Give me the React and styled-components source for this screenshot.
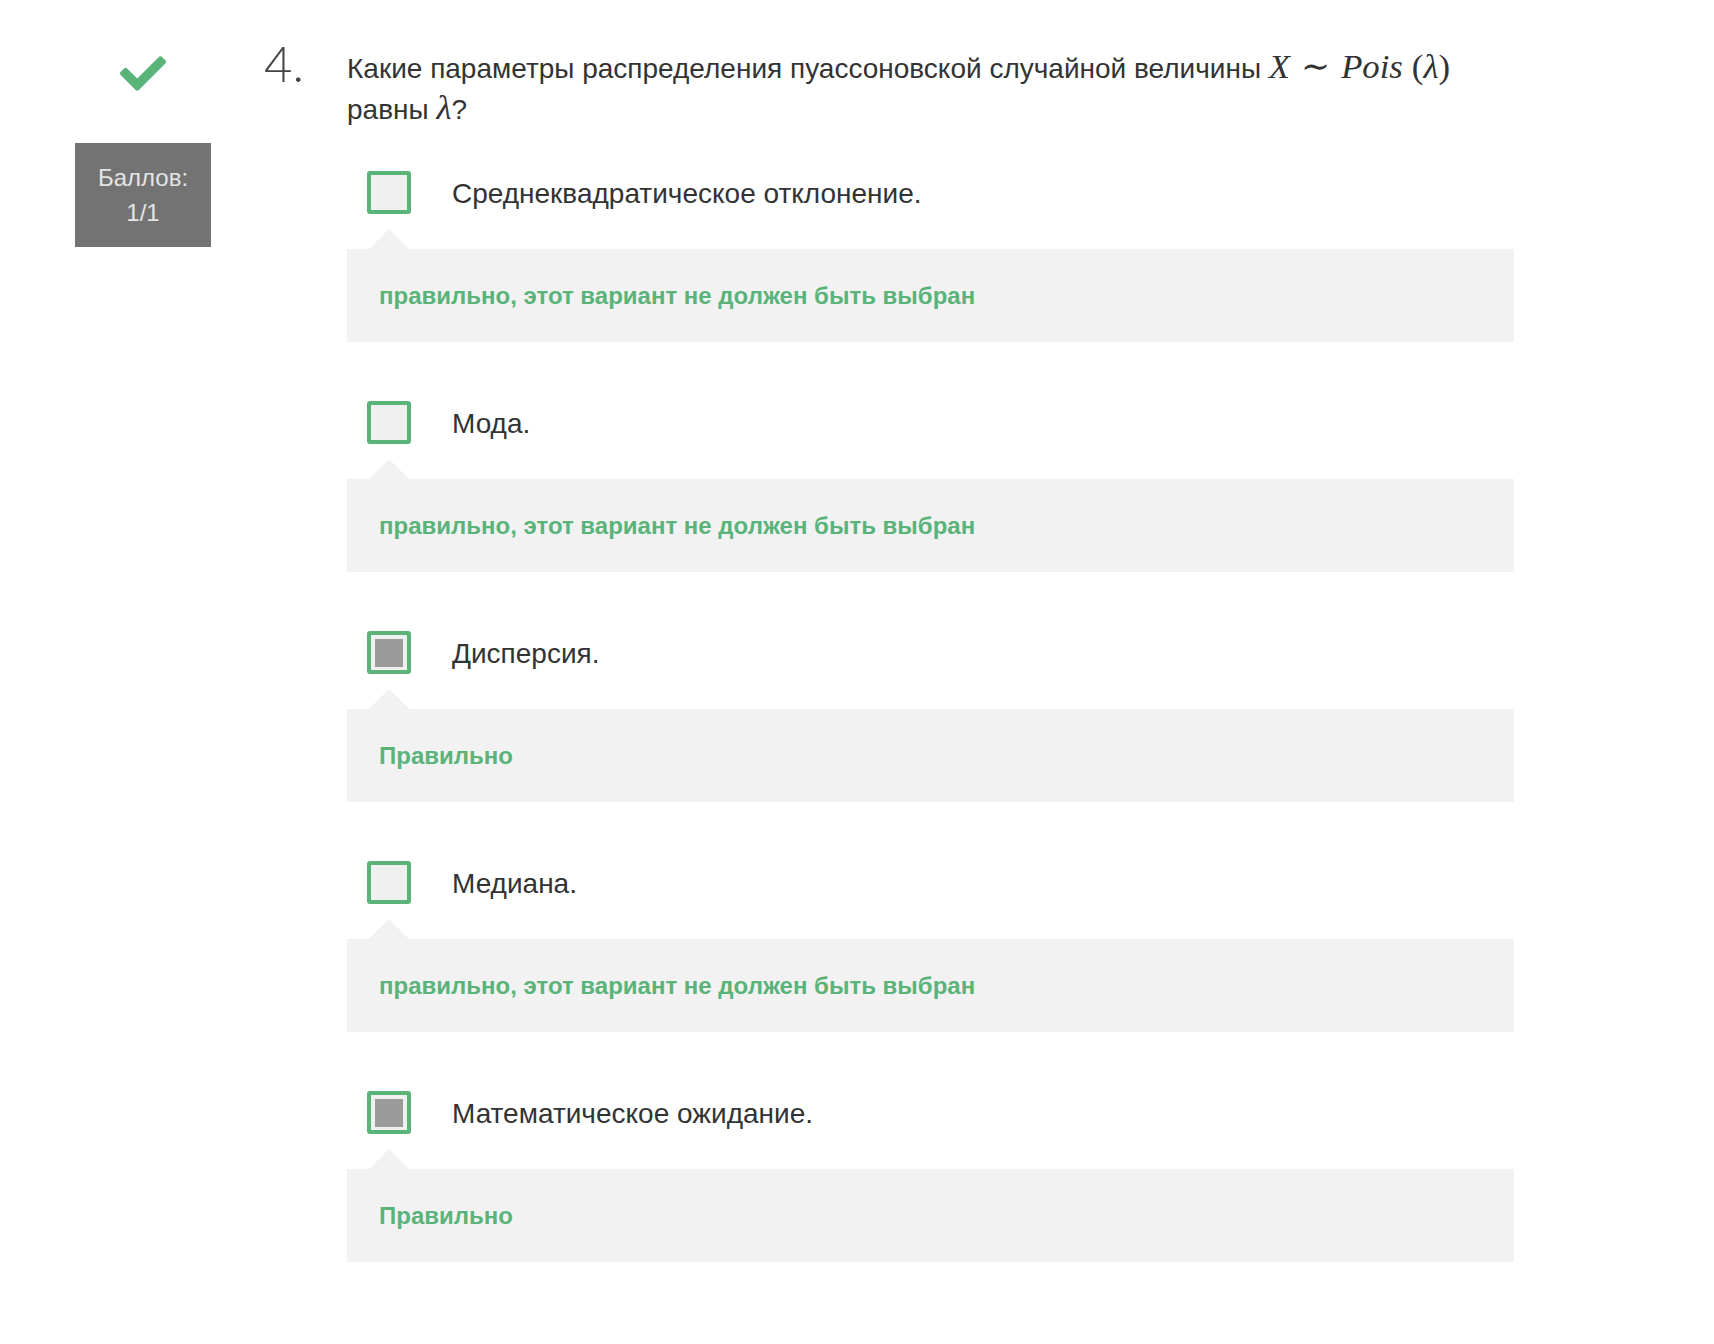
import React from "react";
import styled, { createGlobalStyle } from "styled-components";

const GREEN = "#5ab47a";

const GlobalStyle = createGlobalStyle`
  html, body {
    margin: 0;
    padding: 0;
    background: #ffffff;
  }
  body {
    font-family: "Liberation Sans", Arial, sans-serif;
    color: #333333;
  }
`;

const Page = styled.div`
  display: flex;
  align-items: flex-start;
  padding: 48px 0 80px 75px;
`;

const LeftCol = styled.div`
  width: 136px;
  display: flex;
  flex-direction: column;
  align-items: center;
`;

const CheckMark = styled.svg`
  width: 46px;
  height: 35px;
  margin-top: 8px;
  fill: ${GREEN};
`;

const ScoreBox = styled.div`
  margin-top: 52px;
  width: 136px;
  height: 104px;
  box-sizing: border-box;
  padding: 17px 0;
  background: #737373;
  color: #e4e4e4;
  font-size: 24px;
  line-height: 35px;
  text-align: center;
`;

const Number = styled.div`
  width: 136px;
  box-sizing: border-box;
  padding-left: 53px;
  margin-top: -9px;
  font-family: "Lato", "Open Sans", sans-serif;
  font-weight: 300;
  font-size: 49px;
  line-height: 48px;
  color: #444444;
`;

const Body = styled.div`
  width: 1167px;
`;

const Question = styled.div`
  font-size: 28px;
  line-height: 41px;
  color: #333333;
`;

const MathExpr = styled.span`
  font-family: "Liberation Serif", "DejaVu Serif", serif;
  font-size: 1.24em;
  line-height: 1;
`;

const MathVar = styled.span`
  font-style: italic;
  margin-right: ${(p) => p.$gap || 0}px;
`;

const MathOp = styled.span`
  font-style: normal;
  margin: 0 ${(p) => p.$gap || 0}px;
`;

const Options = styled.div`
  margin-top: 41px;
  display: flex;
  flex-direction: column;
  gap: 59px;
`;

const Option = styled.div`
  display: flex;
  flex-direction: column;
`;

const OptionRow = styled.div`
  display: flex;
  align-items: center;
  height: 43px;
  padding-left: 20px;
`;

const Checkbox = styled.div`
  width: 44px;
  height: 43px;
  box-sizing: border-box;
  border: 4px solid ${GREEN};
  border-radius: 3px;
  background: #f0f0f0;
  display: flex;
  align-items: center;
  justify-content: center;
  flex-shrink: 0;
`;

const CheckFill = styled.div`
  width: 28px;
  height: 28px;
  background: #9b9b9b;
`;

const OptionLabel = styled.div`
  margin-left: 41px;
  padding-top: 3px;
  font-size: 28px;
  line-height: 32px;
  color: #333333;
`;

const Feedback = styled.div`
  position: relative;
  margin-top: 35px;
  height: 93px;
  background: #f2f2f2;
  display: flex;
  align-items: center;
  padding-left: 32px;
  font-size: 24px;
  font-weight: 700;
  color: ${GREEN};

  &::before {
    content: "";
    position: absolute;
    top: -20px;
    left: 22px;
    border-left: 20px solid transparent;
    border-right: 20px solid transparent;
    border-bottom: 20px solid #f2f2f2;
  }
`;

const options = [
  { label: "Среднеквадратическое отклонение.", checked: false, feedback: "правильно, этот вариант не должен быть выбран" },
  { label: "Мода.", checked: false, feedback: "правильно, этот вариант не должен быть выбран" },
  { label: "Дисперсия.", checked: true, feedback: "Правильно" },
  { label: "Медиана.", checked: false, feedback: "правильно, этот вариант не должен быть выбран" },
  { label: "Математическое ожидание.", checked: true, feedback: "Правильно" },
];

export default function App() {
  return (
    <>
      <GlobalStyle />
      <Page>
        <LeftCol>
          <CheckMark viewBox="0 64 512 384" aria-hidden="true">
            <path d="M173.898 439.404l-166.4-166.4c-9.997-9.997-9.997-26.206 0-36.204l36.203-36.204c9.997-9.998 26.207-9.998 36.204 0L192 312.69 432.095 72.596c9.997-9.997 26.207-9.997 36.204 0l36.203 36.204c9.997 9.997 9.997 26.206 0 36.204l-294.4 294.401c-9.998 9.997-26.207 9.997-36.204-.001z" />
          </CheckMark>
          <ScoreBox>
            <div>Баллов:</div>
            <div>1/1</div>
          </ScoreBox>
        </LeftCol>
        <Number>4.</Number>
        <Body>
          <Question>
            Какие параметры распределения пуассоновской случайной величины{" "}
            <MathExpr>
              <MathVar>X</MathVar>
              <MathOp $gap={11}>∼</MathOp>
              <MathVar $gap={9}>Pois</MathVar>
              <MathOp>(</MathOp>
              <MathVar>λ</MathVar>
              <MathOp>)</MathOp>
            </MathExpr>
            <br />
            равны <MathExpr><MathVar>λ</MathVar></MathExpr>?
          </Question>
          <Options>
            {options.map((o) => (
              <Option key={o.label}>
                <OptionRow>
                  <Checkbox>{o.checked && <CheckFill />}</Checkbox>
                  <OptionLabel>{o.label}</OptionLabel>
                </OptionRow>
                <Feedback>{o.feedback}</Feedback>
              </Option>
            ))}
          </Options>
        </Body>
      </Page>
    </>
  );
}
